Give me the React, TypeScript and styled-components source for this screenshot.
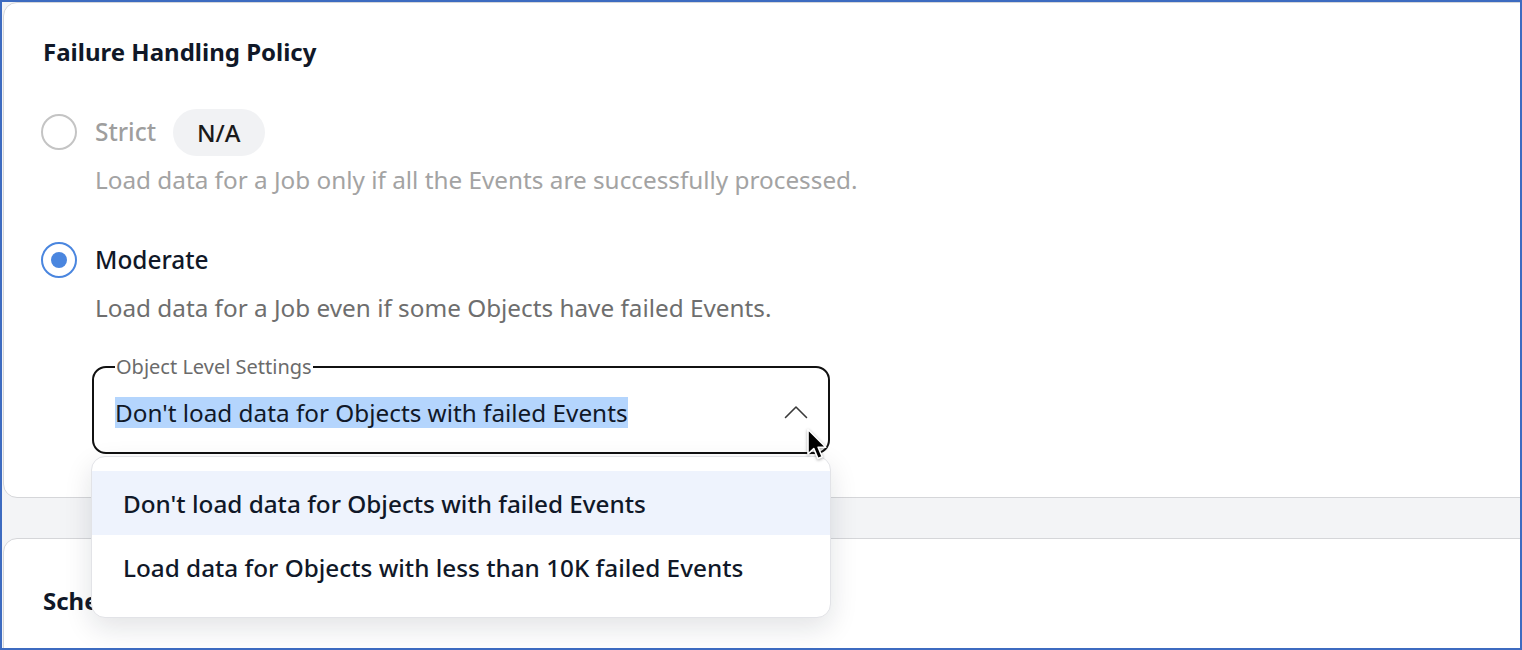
import styled, { createGlobalStyle } from 'styled-components'

const GlobalStyle = createGlobalStyle`
    html, body {
        margin: 0;
        padding: 0;
    }
    body {
        font-family: "Noto Sans", "Open Sans", sans-serif;
        color: #101828;
    }
`

const Frame = styled.div`
    width: 1522px;
    height: 650px;
    box-sizing: border-box;
    border: 2px solid #3d6bc0;
    background: #f3f4f6;
    overflow: hidden;
    display: flex;
    flex-direction: column;
    gap: 40px;
    padding-left: 1px;
`

const Card = styled.section<{ $top: number, $bottom?: number }>`
    flex-shrink: 0;
    background: #fff;
    border: 1px solid #d5d6d9;
    border-radius: 14px;
    margin-right: -40px;
    padding: ${({ $top }) => $top}px 40px ${({ $bottom }) => $bottom ?? 0}px 37px;
    ${({ $bottom }) => $bottom === undefined ? `min-height: 200px;` : ""}
`

const Title = styled.h2`
    margin: 0;
    padding-left: 2px;
    font-size: 24px;
    line-height: 32px;
    font-weight: 700;
    color: #101828;
`

const Option = styled.div<{ $gap: number }>`
    display: flex;
    flex-direction: column;
    margin-top: ${({ $gap }) => $gap}px;
`

const OptionRow = styled.div`
    display: flex;
    align-items: center;
    gap: 17px;
    min-height: 48px;
`

const Radio = styled.span<{ $checked?: boolean }>`
    width: 36px;
    height: 36px;
    box-sizing: border-box;
    border-radius: 50%;
    border: 2px solid ${({ $checked }) => $checked ? "#4a86df" : "#c4c4c4"};
    display: flex;
    align-items: center;
    justify-content: center;
    &::after {
        content: "";
        width: 16px;
        height: 16px;
        border-radius: 50%;
        background: ${({ $checked }) => $checked ? "#4a86df" : "transparent"};
    }
`

const OptionLabel = styled.span<{ $disabled?: boolean }>`
    font-size: 24.4px;
    line-height: 32px;
    font-weight: 500;
    padding-left: 1px;
    color: ${({ $disabled }) => $disabled ? "#9e9e9e" : "#101828"};
`

const Pill = styled.span`
    display: inline-flex;
    align-items: center;
    height: 47px;
    padding: 0 24px;
    border-radius: 24px;
    background: #f1f2f4;
    font-size: 24px;
    font-weight: 500;
    color: #1a1a1a;
`

const Hint = styled.p<{ $disabled?: boolean }>`
    margin: 8px 0 0 54px;
    font-size: 24.3px;
    line-height: 32px;
    color: ${({ $disabled }) => $disabled ? "#a3a3a3" : "#6e6e6e"};
`

const SelectWrap = styled.div`
    position: relative;
    width: 738px;
    margin: 30px 0 0 51px;
`

const Field = styled.fieldset`
    margin: 0;
    min-width: 0;
    box-sizing: border-box;
    border: 2px solid #111;
    border-radius: 14px;
    padding: 8px 20px 16px 21px;
`

const Legend = styled.legend`
    padding: 0 1px;
    font-size: 20px;
    line-height: 26px;
    color: #6b6b6b;
`

const ValueRow = styled.div`
    display: flex;
    align-items: center;
    justify-content: space-between;
    height: 48px;
`

const Value = styled.span`
    font-size: 24.3px;
    line-height: 31px;
    background: #b4d5fd;
    color: #101828;
`

const Menu = styled.ul`
    position: absolute;
    left: -1px;
    right: -1px;
    top: calc(100% + 2px);
    margin: 0;
    padding: 14px 0 18px;
    list-style: none;
    background: #fff;
    border: 1px solid #e2e3e7;
    border-radius: 14px;
    box-shadow: 0 10px 28px rgba(16, 24, 40, 0.12);
    z-index: 2;
`

const MenuItem = styled.li<{ $active?: boolean }>`
    display: flex;
    align-items: center;
    height: 64px;
    padding-left: 31px;
    font-size: 24.3px;
    font-weight: 500;
    color: #101828;
    background: ${({ $active }) => $active ? "#eef3fd" : "transparent"};
`

const Pointer = styled.svg`
    position: absolute;
    left: 714px;
    top: 74px;
    z-index: 3;
    filter: drop-shadow(0 1px 1.5px rgba(0, 0, 0, 0.35));
`

const ChevronUp = () => (
    <svg width="24" height="14" viewBox="0 0 24 14" fill="none">
        <path d="M1.5 12.5 L12 2 L22.5 12.5" stroke="#3a3a3a" strokeWidth="1.6" strokeLinecap="round" strokeLinejoin="round" />
    </svg>
)

const options = [
    "Don't load data for Objects with failed Events",
    "Load data for Objects with less than 10K failed Events",
]

const App = () => {
    return (
        <>
            <GlobalStyle />
            <Frame>
                <Card $top={33} $bottom={43}>
                    <Title>Failure Handling Policy</Title>
                    <Option $gap={40}>
                        <OptionRow>
                            <Radio />
                            <OptionLabel $disabled>Strict</OptionLabel>
                            <Pill>N/A</Pill>
                        </OptionRow>
                        <Hint $disabled>Load data for a Job only if all the Events are successfully processed.</Hint>
                    </Option>
                    <Option $gap={40}>
                        <OptionRow>
                            <Radio $checked />
                            <OptionLabel>Moderate</OptionLabel>
                        </OptionRow>
                        <Hint>Load data for a Job even if some Objects have failed Events.</Hint>
                    </Option>
                    <SelectWrap>
                        <Field>
                            <Legend>Object Level Settings</Legend>
                            <ValueRow>
                                <Value>{options[0]}</Value>
                                <ChevronUp />
                            </ValueRow>
                        </Field>
                        <Menu>
                            {options.map((o, i) => (
                                <MenuItem key={o} $active={i === 0}>{o}</MenuItem>
                            ))}
                        </Menu>
                        <Pointer width="24" height="34" viewBox="0 0 24 34">
                            <path d="M2 1.5 L2 26 L7.8 20.6 L12 30.5 L16.2 28.7 L12.1 19.2 L19.8 19.2 Z" fill="#000" stroke="#fff" strokeWidth="1.6" strokeLinejoin="round" />
                        </Pointer>
                    </SelectWrap>
                </Card>
                <Card $top={46}>
                    <Title>Schedule</Title>
                </Card>
            </Frame>
        </>
    )
}

export default App
